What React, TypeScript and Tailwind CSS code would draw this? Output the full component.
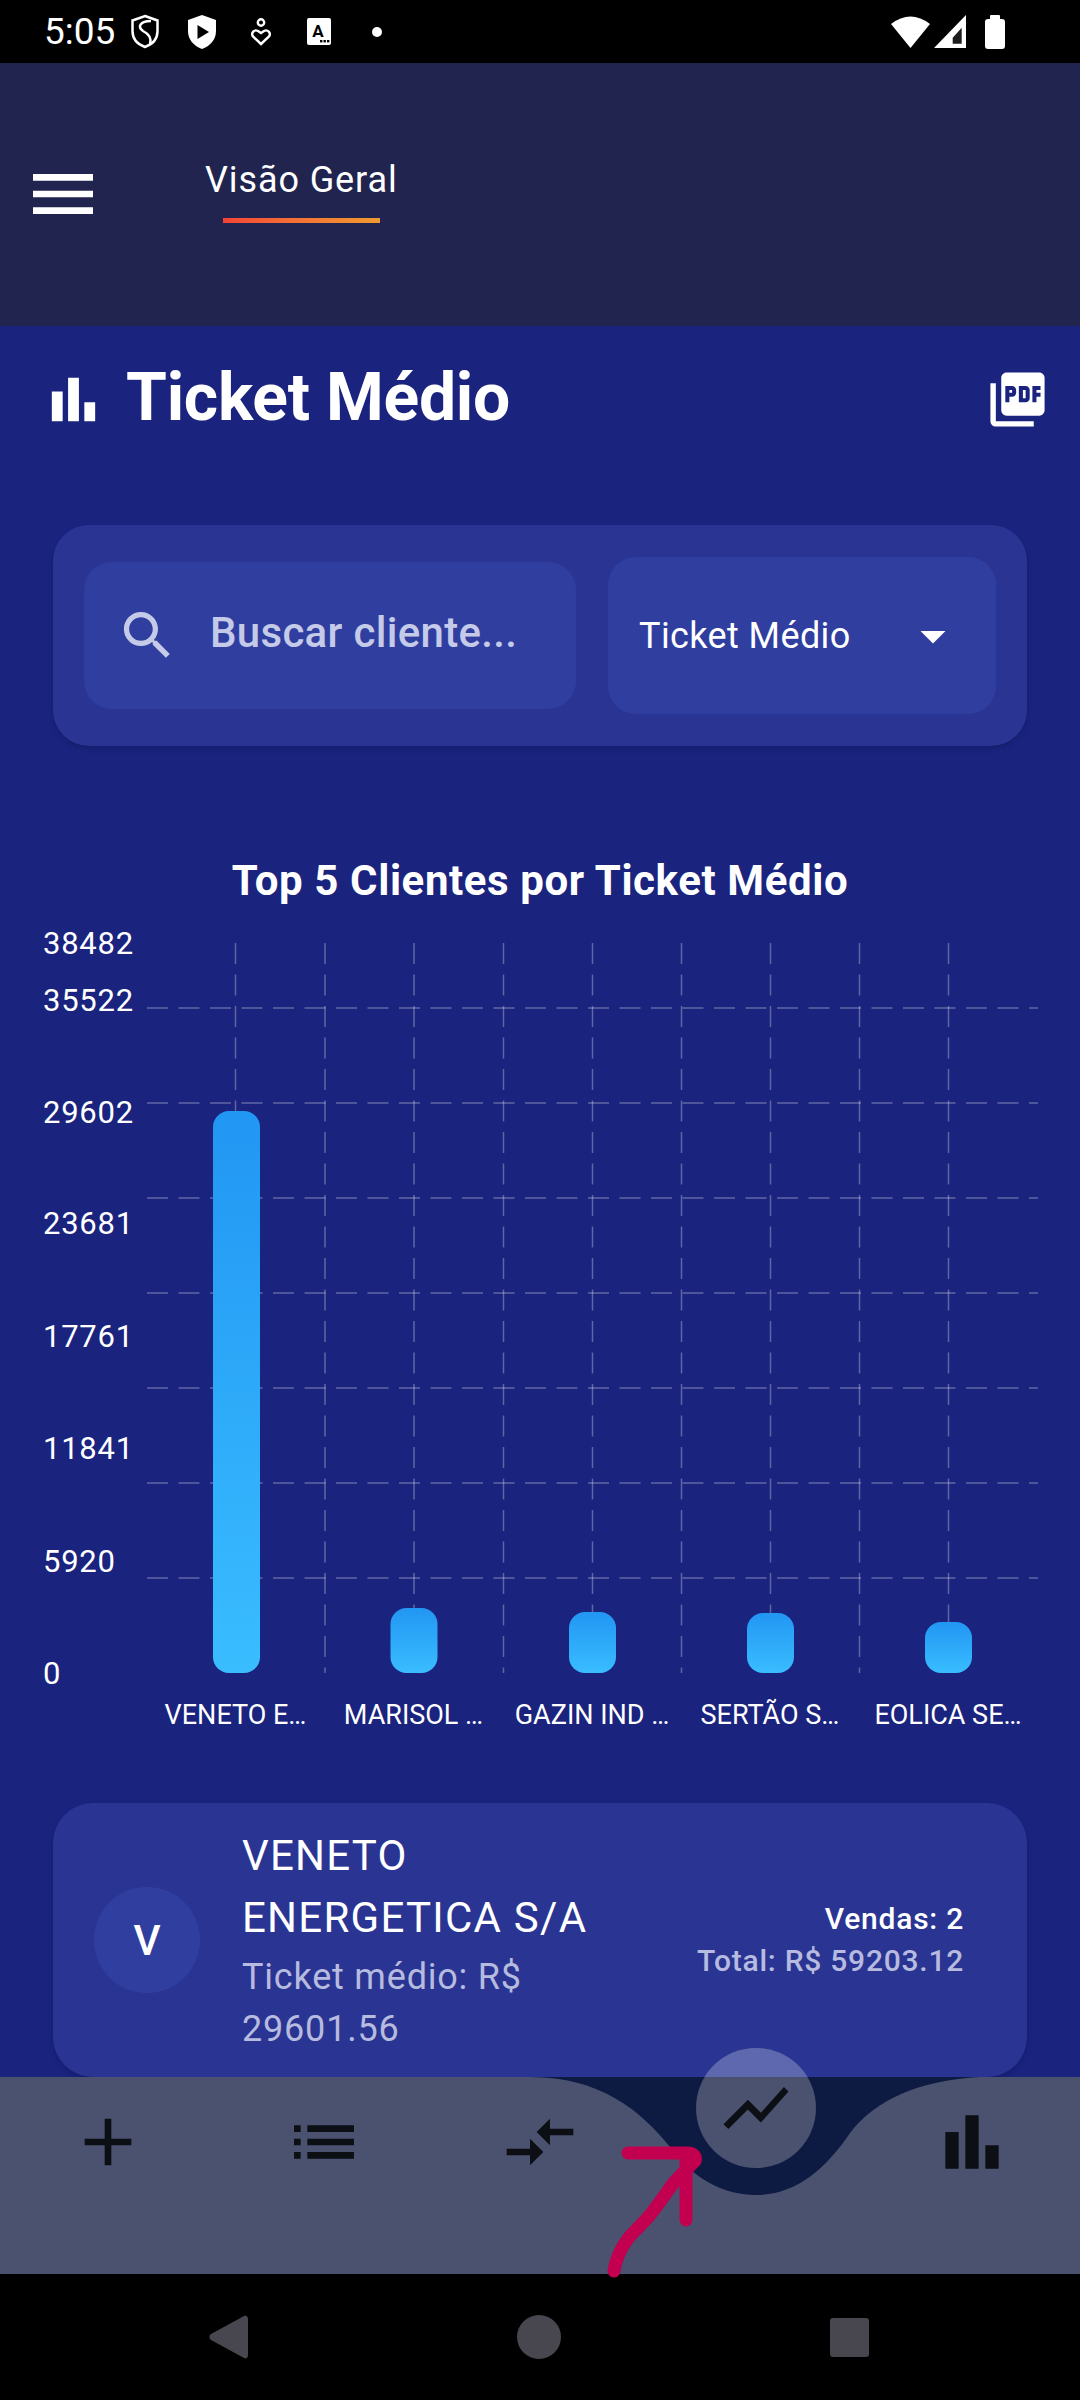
const yTicks = [
  { label: "38482", y: 33 },
  { label: "35522", y: 90 },
  { label: "29602", y: 202 },
  { label: "23681", y: 313 },
  { label: "17761", y: 426 },
  { label: "11841", y: 538 },
  { label: "5920", y: 651 },
  { label: "0", y: 763 },
];

const gridY = [98, 193, 288, 383, 478, 573, 668];
const gridX = [235.5, 325, 414, 503.5, 592.5, 681.5, 770.5, 859.5, 948.5];

const bars = [
  { name: "VENETO E…", x: 236.5, top: 201 },
  { name: "MARISOL …", x: 414, top: 698 },
  { name: "GAZIN IND …", x: 592.5, top: 702 },
  { name: "SERTÃO S…", x: 770.5, top: 703 },
  { name: "EOLICA SE…", x: 948.5, top: 712 },
];

function MaterialIcon({ d, size, className }: { d: string; size: number; className?: string }) {
  return (
    <svg width={size} height={size} viewBox="0 0 24 24" fill="currentColor" className={className}>
      <path d={d} />
    </svg>
  );
}

const icons = {
  menu: "M3 18h18v-2H3v2zm0-5h18v-2H3v2zm0-7v2h18V6H3z",
  bars: "M4 9h4v11H4zM16 13h4v7h-4zM10 4h4v16h-4z",
  pdf: "M20 2H8c-1.1 0-2 .9-2 2v12c0 1.1.9 2 2 2h12c1.1 0 2-.9 2-2V4c0-1.1-.9-2-2-2zm-8.5 7.5c0 .83-.67 1.5-1.5 1.5H9v2H7.5V7H10c.83 0 1.5.67 1.5 1.5v1zm5 2c0 .83-.67 1.5-1.5 1.5h-2.5V7H15c.83 0 1.5.67 1.5 1.5v3zm4-3H19v1h1.5V11H19v2h-1.5V7h3v1.5zM9 9.5h1v-1H9v1zM4 6H2v14c0 1.1.9 2 2 2h14v-2H4V6zm10 5.5h1v-3h-1v3z",
  search: "M15.5 14h-.79l-.28-.27C15.41 12.59 16 11.11 16 9.5 16 5.91 13.09 3 9.5 3S3 5.91 3 9.5 5.91 16 9.5 16c1.61 0 3.09-.59 4.23-1.57l.27.28v.79l5 4.99L20.49 19l-4.99-5zm-6 0C7.01 14 5 11.99 5 9.5S7.01 5 9.5 5 14 7.01 14 9.5 11.99 14 9.5 14z",
  drop: "M7 10l5 5 5-5z",
  add: "M19 13h-6v6h-2v-6H5v-2h6V5h2v6h6v2z",
  list: "M3 13h2v-2H3v2zm0 4h2v-2H3v2zm0-8h2V7H3v2zm4 4h14v-2H7v2zm0 4h14v-2H7v2zM7 7v2h14V7H7z",
  compare: "M9.01 14H2v2h7.01v3L13 15l-3.99-4v3zm5.98-1v-3H22V8h-7.01V5L11 9l3.99 4z",
  trend: "M3.5 18.49l6-6.01 4 4L22 6.92l-1.41-1.41-7.09 7.97-4-4L2 16.99z",
};

function StatusBar() {
  return (
    <div className="h-[63px] bg-black flex items-center pl-[44px] pr-[75px] text-white shrink-0">
      <span className="text-[37px] leading-none w-[69px]">5:05</span>
      <svg width="30" height="35" viewBox="0 0 30 35" className="ml-[17px]" fill="none" stroke="white" strokeWidth="2.5">
        <path d="M15 2 L27.5 6.5 V17 C27.5 25 22 30.5 15 33 C8 30.5 2.5 25 2.5 17 V6.5 Z" />
        <path d="M21 7 C10 7 7 13 13 17 C19 20 22 24 20 30" />
      </svg>
      <svg width="30" height="36" viewBox="0 0 30 36" className="ml-[27px]">
        <path d="M15 1 L29 6 V17 C29 26 23 32 15 35 C7 32 1 26 1 17 V6 Z" fill="white" />
        <path d="M10.5 11 L22 18 L10.5 25 Z" fill="black" />
      </svg>
      <svg width="20" height="28" viewBox="0 0 20 28" className="ml-[34px]" fill="none" stroke="white" strokeWidth="2.4">
        <circle cx="10" cy="4.5" r="3.2" />
        <path d="M10 26 L2 18.5 C-0.5 15 3.5 11 7 13 L10 15 L13 13 C16.5 11 20.5 15 18 18.5 Z" />
      </svg>
      <svg width="24" height="27" viewBox="0 0 24 27" className="ml-[36px]">
        <rect width="24" height="27" rx="2" fill="white" />
        <text x="11" y="19" textAnchor="middle" fontSize="17" fontWeight="700" fill="black">A</text>
        <rect x="13" y="22" width="2.4" height="2.4" fill="black" />
        <rect x="16.5" y="22" width="2.4" height="2.4" fill="black" />
        <rect x="20" y="22" width="2.4" height="2.4" fill="black" />
      </svg>
      <span className="ml-[41px] w-[10px] h-[10px] rounded-full bg-white" />
      <svg width="39" height="33" viewBox="0 0 39 33" className="ml-auto" fill="white">
        <path d="M0 9 Q19.5 -6 39 9 L19.5 33 Z" />
      </svg>
      <svg width="32" height="33" viewBox="0 0 32 33" className="ml-[4px]">
        <path d="M0 33 L32 0 V33 Z" fill="white" />
        <path d="M18.7 22.7 L27.7 12.7 V28.7 H18.7 Z" fill="#1c1c1c" />
      </svg>
      <svg width="20" height="34" viewBox="0 0 20 34" className="ml-[19px]" fill="white">
        <rect x="5" y="0" width="10" height="6" rx="1" />
        <rect x="0" y="4" width="20" height="30" rx="3" />
      </svg>
    </div>
  );
}

function Header() {
  return (
    <div className="h-[263px] bg-[#20244f] flex items-start shrink-0 text-white">
      <MaterialIcon d={icons.menu} size={80} className="ml-[23px] mt-[91px]" />
      <div className="ml-[102px] mt-[93px] flex flex-col items-center">
        <span className="text-[36px] leading-[48px] tracking-[0.9px]">Visão Geral</span>
        <div className="mt-[14px] w-[157px] h-[5px] bg-gradient-to-r from-[#f44336] to-[#ef9a30]" />
      </div>
    </div>
  );
}

function Filters() {
  return (
    <div className="mx-[53px] h-[221px] rounded-[36px] bg-[#2a3593] shadow-md flex items-center pl-[31px] gap-[32px]">
      <div className="w-[492px] h-[147px] rounded-[28px] bg-[#303f9f] flex items-center pl-[32px] text-[#c5cae9]">
        <MaterialIcon d={icons.search} size={63} />
        <span className="ml-[31px] pb-[6px] text-[42px] font-medium tracking-[0.3px]">Buscar cliente...</span>
      </div>
      <div className="w-[388px] h-[157px] rounded-[28px] bg-[#303f9f] flex items-center justify-between pl-[31px] pr-[33px] text-white">
        <span className="text-[36px] tracking-[0.4px]">Ticket Médio</span>
        <MaterialIcon d={icons.drop} size={60} />
      </div>
    </div>
  );
}

function Chart() {
  return (
    <svg width="1080" height="830" viewBox="0 0 1080 830" className="block">
      <defs>
        <linearGradient id="barFill" x1="0" y1="0" x2="0" y2="1">
          <stop offset="0" stopColor="#2196f3" />
          <stop offset="1" stopColor="#3abdff" />
        </linearGradient>
      </defs>
      {gridY.map((y) => (
        <line key={y} x1="147" x2="1038" y1={y} y2={y} stroke="#ffffff" strokeOpacity="0.3" strokeWidth="1.5" strokeDasharray="21 10.5" />
      ))}
      {gridX.map((x) => (
        <line key={x} x1={x} x2={x} y1="33" y2="763" stroke="#ffffff" strokeOpacity="0.3" strokeWidth="1.5" strokeDasharray="21 10.5" />
      ))}
      {bars.map((b) => (
        <rect key={b.name} x={b.x - 23.5} y={b.top} width="47" height={763 - b.top} rx="16" fill="url(#barFill)" />
      ))}
      {yTicks.map((t) => (
        <text key={t.label} x="43" y={t.y + 11} fontSize="31" letterSpacing="0.75" fill="white">
          {t.label}
        </text>
      ))}
      {bars.map((b) => (
        <text key={b.name} x={b.x === 236.5 ? 235.5 : b.x - 0.5} y="814" textAnchor="middle" fontSize="27" fill="white">
          {b.name}
        </text>
      ))}
    </svg>
  );
}

function ClientCard() {
  return (
    <div className="mx-[53px] h-[274px] shrink-0 rounded-[40px] bg-[#2a3593] shadow-md flex items-center pl-[41px] pr-[63px]">
      <div className="w-[106px] h-[106px] rounded-full bg-[#303f9f] flex items-center justify-center text-white text-[42px] font-medium shrink-0">
        V
      </div>
      <div className="ml-[42px] w-[362px]">
        <div className="text-white text-[42px] leading-[62px] mb-[2px] tracking-[1.25px]">VENETO ENERGETICA S/A</div>
        <div className="text-[36px] leading-[52px] tracking-[0.8px] text-[#b6bbdf]">Ticket médio: R$ 29601.56</div>
      </div>
      <div className="ml-auto text-right">
        <div className="text-white text-[30px] leading-[42px] font-medium tracking-[0.75px]">Vendas: 2</div>
        <div className="text-[#b6bbdf] text-[30px] leading-[42px] font-medium tracking-[0.75px]">Total: R$ 59203.12</div>
      </div>
    </div>
  );
}

function BottomNav() {
  return (
    <div className="relative h-[197px] bg-[#0d1b42] shrink-0">
      <svg width="1080" height="197" viewBox="0 0 1080 197" className="absolute inset-0">
        <path d="M0 0 H530 C600 0 640 33 670 70 C690 98 720 118 756 118 C795 118 825 93 850 56 C875 23 920 3 980 0 H1080 V197 H0 Z" fill="#4a5270" />
      </svg>
      <div className="relative grid grid-cols-5 pt-[25px] text-[#0c0f14]">
        <div className="flex justify-center"><MaterialIcon d={icons.add} size={80} /></div>
        <div className="flex justify-center"><MaterialIcon d={icons.list} size={80} /></div>
        <div className="flex justify-center"><MaterialIcon d={icons.compare} size={80} /></div>
        <div />
        <div className="flex justify-center"><MaterialIcon d={icons.bars} size={80} /></div>
      </div>
      <div className="absolute left-[696px] top-[-29px] w-[120px] h-[120px] rounded-full overflow-hidden bg-[#4a5270] flex items-center justify-center text-[#0c0f14]">
        <div className="absolute top-0 inset-x-0 h-[29px] bg-[#5e68ae]" />
        <MaterialIcon d={icons.trend} size={78} className="relative" />
      </div>
      <svg width="120" height="145" viewBox="0 0 120 145" fill="none" stroke="#c2004f" strokeWidth="13" strokeLinecap="round" strokeLinejoin="round" className="absolute left-[600px] top-[60px] z-10">
        <path d="M28 16 H88 Q97 17 95 24 C85 34 78 40 72 48 C65 58 58 68 50 78 C44 85 38 91 33 96 C24 105 16 120 14 134" />
        <path d="M86 22 V83" />
      </svg>
    </div>
  );
}

function SystemNav() {
  return (
    <div className="h-[126px] bg-black flex items-center justify-center shrink-0 pr-[2px]">
      <svg width="39" height="44" viewBox="0 0 39 44" className="mr-[269px]" fill="#48464e">
        <path d="M35 1 C37 0 39 1 39 4 V40 C39 43 37 44 35 43 L2 25 C0 24 0 20 2 19 Z" />
      </svg>
      <span className="w-[44px] h-[44px] rounded-full bg-[#48464e]" />
      <span className="ml-[269px] w-[39px] h-[39px] rounded-[3px] bg-[#48464e]" />
    </div>
  );
}

export default function App() {
  return (
    <div className="w-[1080px] h-[2400px] overflow-hidden flex flex-col bg-[#1a237e] font-[Roboto,sans-serif]">
      <StatusBar />
      <Header />
      <main className="flex-1 flex flex-col min-h-0">
        <div className="h-[146px] flex items-center justify-between pl-[41px] pr-[30px] text-white shrink-0">
          <div className="flex items-center">
            <MaterialIcon d={icons.bars} size={65} />
            <h1 className="ml-[20px] text-[66px] font-bold leading-none tracking-[-0.25px] -translate-y-px">Ticket Médio</h1>
          </div>
          <MaterialIcon d={icons.pdf} size={65} />
        </div>
        <div className="mt-[53px]">
          <Filters />
        </div>
        <h2 className="mt-[105px] h-[59px] text-center text-[42px] leading-[60px] font-bold text-white tracking-[0.6px]">
          Top 5 Clientes por Ticket Médio
        </h2>
        <Chart />
        <div className="mt-[63px]">
          <ClientCard />
        </div>
      </main>
      <BottomNav />
      <SystemNav />
    </div>
  );
}
